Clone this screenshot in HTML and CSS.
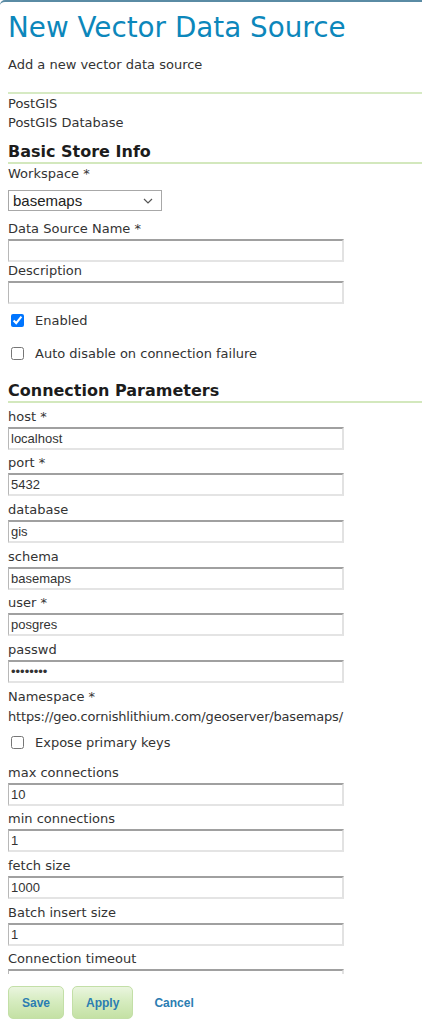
FILE: index.html
```html
<!DOCTYPE html>
<html lang="en">
<head>
<meta charset="utf-8">
<title>New Vector Data Source</title>
<link rel="stylesheet" href="styles.css">
</head>
<body>
<div class="frame">
  <div class="content">
    <h1 class="title">New Vector Data Source</h1>
    <p class="subtitle">Add a new vector data source</p>
    <div class="store-type">
      <div>PostGIS</div>
      <div>PostGIS Database</div>
    </div>

    <h2 class="section section-first">Basic Store Info</h2>
    <label class="lbl lbl-ws">Workspace *</label>
    <div class="select-wrap">
      <select class="select">
        <option>basemaps</option>
      </select>
      <svg class="chev" width="10" height="6" viewBox="0 0 10 6" aria-hidden="true"><path d="M1 1 L5 5 L9 1" fill="none" stroke="#555" stroke-width="1.2"/></svg>
    </div>
    <label class="lbl lbl-dsn">Data Source Name *</label>
    <input class="text" type="text" value="">
    <label class="lbl">Description</label>
    <input class="text" type="text" value="">
    <div class="check check-enabled">
      <input type="checkbox" checked>
      <span>Enabled</span>
    </div>
    <div class="check check-auto">
      <input type="checkbox">
      <span>Auto disable on connection failure</span>
    </div>

    <h2 class="section section-conn">Connection Parameters</h2>
    <div class="field"><label class="lbl">host *</label><input class="text" type="text" value="localhost"></div>
    <div class="field"><label class="lbl">port *</label><input class="text" type="text" value="5432"></div>
    <div class="field"><label class="lbl">database</label><input class="text" type="text" value="gis"></div>
    <div class="field"><label class="lbl">schema</label><input class="text" type="text" value="basemaps"></div>
    <div class="field"><label class="lbl">user *</label><input class="text" type="text" value="posgres"></div>
    <div class="field"><label class="lbl">passwd</label><input class="text" type="password" value="xxxxxxxx"></div>
    <div class="field"><label class="lbl">Namespace *</label><div class="ns">https://geo.cornishlithium.com/geoserver/basemaps/</div></div>
    <div class="check check-expose">
      <input type="checkbox">
      <span>Expose primary keys</span>
    </div>
    <div class="field field-gap"><label class="lbl">max connections</label><input class="text" type="text" value="10"></div>
    <div class="field"><label class="lbl">min connections</label><input class="text" type="text" value="1"></div>
    <div class="field"><label class="lbl">fetch size</label><input class="text" type="text" value="1000"></div>
    <div class="field"><label class="lbl">Batch insert size</label><input class="text" type="text" value="1"></div>
    <div class="field"><label class="lbl">Connection timeout</label><input class="text" type="text" value=""></div>
  </div>
  <div class="buttons">
    <button class="btn" type="button">Save</button>
    <button class="btn" type="button">Apply</button>
    <a class="cancel" href="#">Cancel</a>
  </div>
</div>
</body>
</html>
```

FILE: styles.css
```css
html, body {
  margin: 0;
  padding: 0;
  background: #ffffff;
}

body {
  font-family: "DejaVu Sans", Verdana, sans-serif;
  font-size: 13px;
  color: #333333;
  overflow: hidden;
}

.frame {
  border-top: 2px solid #5a8ba4;
  border-top-left-radius: 5px;
}

.content {
  height: 972px;
  overflow: hidden;
  padding: 0 0 0 8px;
}

.title {
  margin: 10px 0 0 0;
  font-size: 27.8px;
  line-height: 32px;
  font-weight: normal;
  color: #0c87bb;
}

.subtitle {
  margin: 12px 0 0 0;
  line-height: 17px;
}

.store-type {
  margin-top: 19px;
  border-top: 2px solid #d6eac3;
  line-height: 19px;
}

.section {
  margin: 0;
  font-size: 16px;
  line-height: 20px;
  font-weight: bold;
  color: #1c1c1c;
  border-bottom: 2px solid #d3e8bd;
}

.section-first {
  margin-top: 10px;
}

.section-conn {
  margin-top: 19.5px;
}

.lbl {
  display: block;
  line-height: 17px;
  color: #333333;
}

.lbl-ws {
  margin-top: 1px;
}

.lbl-dsn {
  margin-top: 9px;
}

.select-wrap {
  position: relative;
  width: 154px;
  margin-top: 8px;
}

.select {
  display: block;
  box-sizing: border-box;
  -webkit-appearance: none;
  appearance: none;
  width: 154px;
  height: 21px;
  padding: 0 0 0 4px;
  font-family: "Liberation Sans", Arial, sans-serif;
  font-size: 15px;
  color: #222222;
  background: #ffffff;
  border: 1px solid #a8a8a8;
  border-radius: 0;
}

.chev {
  position: absolute;
  right: 9px;
  top: 8px;
  pointer-events: none;
}

.text {
  display: block;
  box-sizing: border-box;
  margin: 2px 0 0 0;
  width: 336px;
  height: 23px;
  padding: 0 0 0 2px;
  font-family: "Liberation Sans", Arial, sans-serif;
  font-size: 13px;
  color: #333333;
  background: #ffffff;
  border-style: solid;
  border-width: 2px 2px 2px 1px;
  border-color: #a0a0a0 #e2e2e2 #e4e4e4 #b8b8b8;
  outline: none;
}

.check {
  display: flex;
  align-items: center;
  height: 17px;
  line-height: 17px;
}

.check input {
  margin: 0 0 0 3px;
  width: 13px;
  height: 13px;
}

.check span {
  margin-left: 11px;
}

.check-enabled {
  margin-top: 7.5px;
}

.check-auto {
  margin-top: 16px;
}

.field {
  margin-top: 4.67px;
}

.ns {
  margin-top: 2px;
  line-height: 20px;
  color: #333333;
  white-space: nowrap;
  letter-spacing: -0.18px;
}

.check-expose {
  margin-top: 7.5px;
}

.field-gap {
  margin-top: 12.5px;
}

.buttons {
  display: flex;
  align-items: center;
  gap: 8px;
  padding: 12px 0 0 8px;
}

.btn {
  box-sizing: border-box;
  display: inline-flex;
  align-items: center;
  justify-content: center;
  height: 33px;
  padding: 0 13px;
  line-height: 14px;
  font-family: "Liberation Sans", Arial, sans-serif;
  font-size: 12px;
  font-weight: bold;
  color: #2b7db2;
  background: linear-gradient(to bottom, #eaf5df 0%, #d6ecc0 45%, #c4e1a4 100%);
  border: 1px solid #c3dfa7;
  border-radius: 5px;
}

.cancel {
  margin-left: 13px;
  line-height: 14px;
  font-family: "Liberation Sans", Arial, sans-serif;
  font-size: 12px;
  font-weight: bold;
  color: #2b7db2;
  text-decoration: none;
}
```
